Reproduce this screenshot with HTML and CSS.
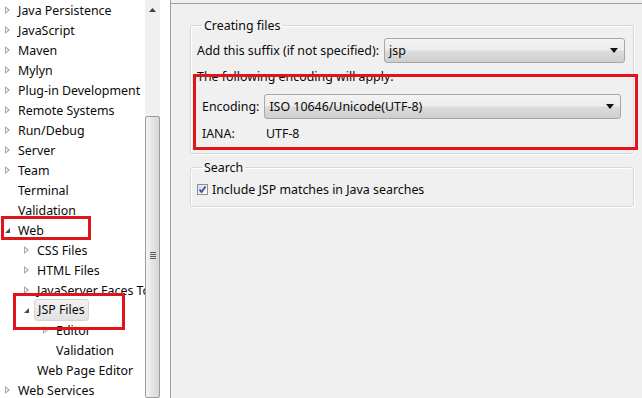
FILE: index.html
```html
<!DOCTYPE html>
<html lang="en">
<head>
  <meta charset="UTF-8">
  <title>Preferences - JSP Files</title>
  <link rel="stylesheet" href="styles.css">
</head>
<body>
  <div class="window">
    <!-- preference tree -->
    <div class="tree">
      <div class="row lv0"><span class="tw closed"></span>Java Persistence</div>
      <div class="row lv0"><span class="tw closed"></span>JavaScript</div>
      <div class="row lv0"><span class="tw closed"></span>Maven</div>
      <div class="row lv0"><span class="tw closed"></span>Mylyn</div>
      <div class="row lv0"><span class="tw closed"></span>Plug-in Development</div>
      <div class="row lv0"><span class="tw closed"></span>Remote Systems</div>
      <div class="row lv0"><span class="tw closed"></span>Run/Debug</div>
      <div class="row lv0"><span class="tw closed"></span>Server</div>
      <div class="row lv0"><span class="tw closed"></span>Team</div>
      <div class="row lv0"><span class="tw"></span>Terminal</div>
      <div class="row lv0"><span class="tw"></span>Validation</div>
      <div class="row lv0"><span class="tw open"></span>Web</div>
      <div class="row lv1"><span class="tw closed"></span>CSS Files</div>
      <div class="row lv1"><span class="tw closed"></span>HTML Files</div>
      <div class="row lv1"><span class="tw closed"></span>JavaServer Faces Tools</div>
      <div class="row lv1"><span class="tw open"></span><span class="selected">JSP Files</span></div>
      <div class="row lv2"><span class="tw closed"></span>Editor</div>
      <div class="row lv2"><span class="tw"></span>Validation</div>
      <div class="row lv1"><span class="tw"></span>Web Page Editor</div>
      <div class="row lv0"><span class="tw closed"></span>Web Services</div>
    </div>

    <div class="vscroll">
      <div class="track">
        <svg class="up" width="7" height="4" viewBox="0 0 7 4"><path d="M0 4 L3.5 0 L7 4 Z" fill="#404040"/></svg>
      </div>
      <div class="thumb"><span class="grip"></span></div>
    </div>

    <div class="gutter"></div>

    <!-- preference page -->
    <div class="page">
      <fieldset class="group">
        <legend>Creating files</legend>
        <div class="field">
          <span>Add this suffix (if not specified):</span>
          <div class="combo suffix"><span>jsp</span><i class="caret"></i></div>
        </div>
        <div class="note">The following encoding will apply:</div>
        <div class="field inset">
          <span>Encoding:</span>
          <div class="combo enc"><span>ISO 10646/Unicode(UTF-8)</span><i class="caret"></i></div>
        </div>
        <div class="field inset iana">
          <span class="key">IANA:</span>
          <span>UTF-8</span>
        </div>
      </fieldset>

      <fieldset class="group search">
        <legend>Search</legend>
        <label class="check"><span class="box">
          <svg width="9" height="9" viewBox="0 0 9 9"><path d="M1.5 4.5 L3.5 7 L7.5 1.5" fill="none" stroke="#3a4aa0" stroke-width="1.8"/></svg>
        </span>Include JSP matches in Java searches</label>
      </fieldset>
    </div>
  </div>

  <!-- annotation boxes -->
  <div class="mark mark-web"></div>
  <div class="mark mark-jsp"></div>
  <div class="mark mark-enc"></div>
</body>
</html>
```

FILE: styles.css
```css
body {
  margin: 0;
  background: #fff;
  font-family: "Noto Sans", "Liberation Sans", sans-serif;
  font-size: 12.4px;
  color: #0a0a0a;
  overflow: hidden;
}

.window {
  display: flex;
  height: 398px;
}

/* tree */
.tree {
  width: 145px;
  overflow: hidden;
  white-space: nowrap;
  background: #fff;
}

.row {
  height: 20px;
  display: flex;
  align-items: center;
}

.lv0 { padding-left: 3px; }
.lv1 { padding-left: 22px; }
.lv2 { padding-left: 41px; }

.tw {
  width: 15px;
  height: 20px;
  flex: none;
  position: relative;
}

.tw.closed::before {
  content: "";
  position: absolute;
  left: 2px;
  top: 6px;
  border-left: 5px solid #a6a6a6;
  border-top: 4px solid transparent;
  border-bottom: 4px solid transparent;
}

.tw.closed::after {
  content: "";
  position: absolute;
  left: 3px;
  top: 8px;
  border-left: 2.5px solid #fff;
  border-top: 2px solid transparent;
  border-bottom: 2px solid transparent;
}

.tw.open::before {
  content: "";
  position: absolute;
  left: 2px;
  top: 8px;
  border-right: 5px solid #4a4a4a;
  border-top: 5px solid transparent;
}

.selected {
  margin-left: -3px;
  padding: 1px 3px 2px;
  background: linear-gradient(#f2f2f2, #e2e2e2);
  border: 1px solid #d4d4d4;
  border-radius: 3px;
}

/* scrollbar */
.vscroll {
  width: 15px;
  display: flex;
  flex-direction: column;
  background: #f0f0f0;
}

.track {
  height: 116px;
  display: flex;
  justify-content: center;
  padding-top: 8px;
  box-sizing: border-box;
}

.thumb {
  flex: 1;
  border: 1px solid #9b9b9b;
  border-radius: 2px;
  background: linear-gradient(90deg, #f4f4f4, #e4e4e4 50%, #d6d6d6);
  display: flex;
  justify-content: center;
  padding-top: 135px;
}

.grip {
  width: 6px;
  height: 7px;
  background: repeating-linear-gradient(#5a5a5a 0 1px, transparent 1px 2px);
}

.gutter {
  width: 10px;
  background: #fff;
}

/* page */
.page {
  flex: 1;
  background: #f0f0f0;
  border-left: 1px solid #a0a0a0;
  padding: 0 8px 0 19px;
  position: relative;
}

.page::before {
  content: "";
  position: absolute;
  left: 0;
  right: 0;
  top: 3px;
  border-top: 1px solid #a0a0a0;
}

.group {
  margin: 17px 0 0;
  padding: 4px 8px 7px 6px;
  border: 1px solid #d8d8d8;
  border-radius: 3px;
  box-shadow: inset 1px 1px #fff, 1px 1px #fff;
}

.group legend {
  padding: 0 2px;
  margin-left: 5px;
}

.field {
  display: flex;
  align-items: center;
  gap: 5px;
  height: 25px;
}

.note {
  margin-top: 3px;
  height: 22px;
  line-height: 22px;
}

.inset {
  padding-left: 5px;
  margin-top: 6px;
}

.iana {
  margin-top: 1px;
  height: 26px;
}

.iana .key {
  width: 59px;
}

.combo {
  flex: 1;
  height: 25px;
  box-sizing: border-box;
  border: 1px solid #a7a7a7;
  border-radius: 3px;
  background: linear-gradient(#f3f3f3, #ececec 48%, #dcdcdc 52%, #cfcfcf);
  display: flex;
  align-items: center;
  padding: 0 6px 0 4px;
}

.combo span {
  flex: 1;
}

.combo.enc {
  margin-right: 4px;
}

.caret {
  width: 0;
  height: 0;
  border-left: 4px solid transparent;
  border-right: 4px solid transparent;
  border-top: 5px solid #111;
}

.search {
  margin-top: 5px;
  padding: 2px 8px 6px 6px;
}

.check {
  display: flex;
  align-items: center;
  gap: 4px;
  height: 22px;
}

.box {
  width: 11px;
  height: 11px;
  box-sizing: border-box;
  border: 1px solid #8e8f8f;
  background: linear-gradient(135deg, #dcdcdc, #fff);
  display: flex;
  align-items: center;
  justify-content: center;
}

/* red annotation boxes drawn over the screenshot */
.mark {
  position: absolute;
  border: 3px solid #e0141b;
}

.mark-web { left: 1px; top: 216px; width: 84px; height: 18px; }
.mark-jsp { left: 13px; top: 293px; width: 106px; height: 31px; }
.mark-enc { left: 193px; top: 74px; width: 439px; height: 70px; }
```
